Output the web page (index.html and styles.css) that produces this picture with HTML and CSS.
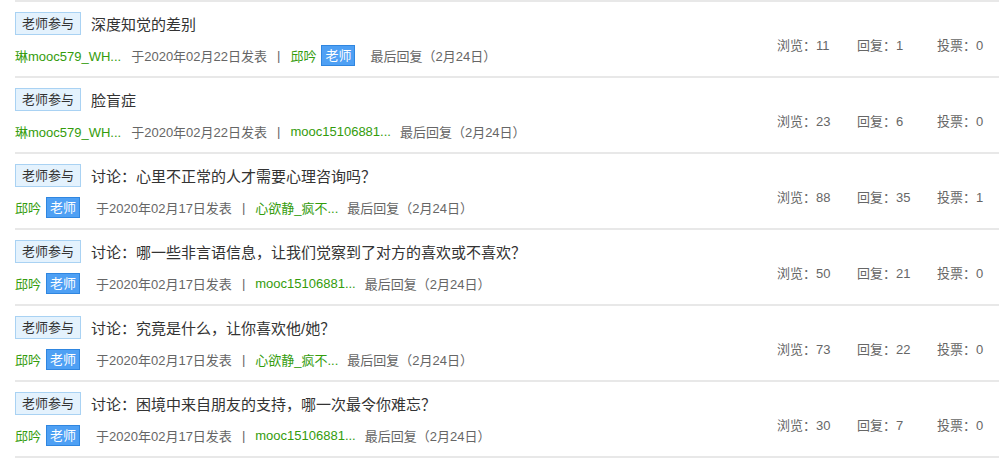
FILE: index.html
```html
<!DOCTYPE html>
<html lang="zh-CN">
<head>
<meta charset="utf-8">
<title>讨论列表</title>
<link rel="stylesheet" href="styles.css">
</head>
<body>
<ul class="topics">
  <li class="topic">
    <div class="main">
      <div class="head"><span class="tag">老师参与</span><a class="title">深度知觉的差别</a></div>
      <div class="meta"><span class="user">琳mooc579_WH...</span><span class="date">于2020年02月22日发表</span><span class="sep">|</span><span class="user reply">邱吟<span class="badge">老师</span></span><span class="last">最后回复（2月24日）</span></div>
    </div>
    <div class="stats"><span>浏览：11</span><span>回复：1</span><span>投票：0</span></div>
  </li>
  <li class="topic">
    <div class="main">
      <div class="head"><span class="tag">老师参与</span><a class="title">脸盲症</a></div>
      <div class="meta"><span class="user">琳mooc579_WH...</span><span class="date">于2020年02月22日发表</span><span class="sep">|</span><span class="user reply">mooc15106881...</span><span class="last">最后回复（2月24日）</span></div>
    </div>
    <div class="stats"><span>浏览：23</span><span>回复：6</span><span>投票：0</span></div>
  </li>
  <li class="topic">
    <div class="main">
      <div class="head"><span class="tag">老师参与</span><a class="title">讨论：心里不正常的人才需要心理咨询吗？</a></div>
      <div class="meta"><span class="user">邱吟<span class="badge">老师</span></span><span class="date">于2020年02月17日发表</span><span class="sep">|</span><span class="user reply">心欲静_疯不...</span><span class="last">最后回复（2月24日）</span></div>
    </div>
    <div class="stats"><span>浏览：88</span><span>回复：35</span><span>投票：1</span></div>
  </li>
  <li class="topic">
    <div class="main">
      <div class="head"><span class="tag">老师参与</span><a class="title">讨论：哪一些非言语信息，让我们觉察到了对方的喜欢或不喜欢？</a></div>
      <div class="meta"><span class="user">邱吟<span class="badge">老师</span></span><span class="date">于2020年02月17日发表</span><span class="sep">|</span><span class="user reply">mooc15106881...</span><span class="last">最后回复（2月24日）</span></div>
    </div>
    <div class="stats"><span>浏览：50</span><span>回复：21</span><span>投票：0</span></div>
  </li>
  <li class="topic">
    <div class="main">
      <div class="head"><span class="tag">老师参与</span><a class="title">讨论：究竟是什么，让你喜欢他/她？</a></div>
      <div class="meta"><span class="user">邱吟<span class="badge">老师</span></span><span class="date">于2020年02月17日发表</span><span class="sep">|</span><span class="user reply">心欲静_疯不...</span><span class="last">最后回复（2月24日）</span></div>
    </div>
    <div class="stats"><span>浏览：73</span><span>回复：22</span><span>投票：0</span></div>
  </li>
  <li class="topic">
    <div class="main">
      <div class="head"><span class="tag">老师参与</span><a class="title">讨论：困境中来自朋友的支持，哪一次最令你难忘？</a></div>
      <div class="meta"><span class="user">邱吟<span class="badge">老师</span></span><span class="date">于2020年02月17日发表</span><span class="sep">|</span><span class="user reply">mooc15106881...</span><span class="last">最后回复（2月24日）</span></div>
    </div>
    <div class="stats"><span>浏览：30</span><span>回复：7</span><span>投票：0</span></div>
  </li>
</ul>
</body>
</html>
```

FILE: styles.css
```css
html, body {
  margin: 0;
  padding: 0;
  background: #fff;
}
body {
  font-family: "Liberation Sans", Arial, "Noto Sans CJK SC", sans-serif;
  font-size: 13px;
  color: #666;
}
.topics {
  list-style: none;
  margin: 0 0 0 15px;
  padding: 0;
  border-top: 2px solid #e8e8e8;
  width: 984px;
}
.topic {
  display: flex;
  border-bottom: 2px solid #e8e8e8;
  padding: 10px 0 10px 0;
}
.main {
  flex: 1;
  display: flex;
  flex-direction: column;
  gap: 10px;
}
.head {
  display: flex;
  align-items: center;
  height: 23px;
}
.tag {
  box-sizing: border-box;
  height: 23px;
  line-height: 21px;
  padding: 0 6px;
  border: 1px solid #a9d2f3;
  background: #e4f2fd;
  color: #333;
  font-size: 13px;
  margin-right: 10px;
}
.title {
  font-size: 15px;
  color: #333;
  margin-top: -1px;
}
.meta {
  display: flex;
  align-items: center;
  height: 21px;
  white-space: nowrap;
}
.user {
  display: flex;
  align-items: center;
  color: #349c0c;
  margin-right: 10px;
}
.user.reply {
  margin-right: 9px;
}
.badge {
  box-sizing: border-box;
  height: 21px;
  line-height: 19px;
  padding: 0 3px;
  margin-left: 5px;
  margin-right: 6px;
  border: 1px solid #2f86e0;
  background: #4ea0f4;
  color: #fff;
}
.date {
  color: #666;
}
.sep {
  color: #666;
  padding: 0 10px;
}
.last {
  color: #666;
}
.stats {
  display: grid;
  grid-template-columns: 80px 80px 62px;
  align-self: center;
  margin-top: 10px;
  color: #666;
}
```
